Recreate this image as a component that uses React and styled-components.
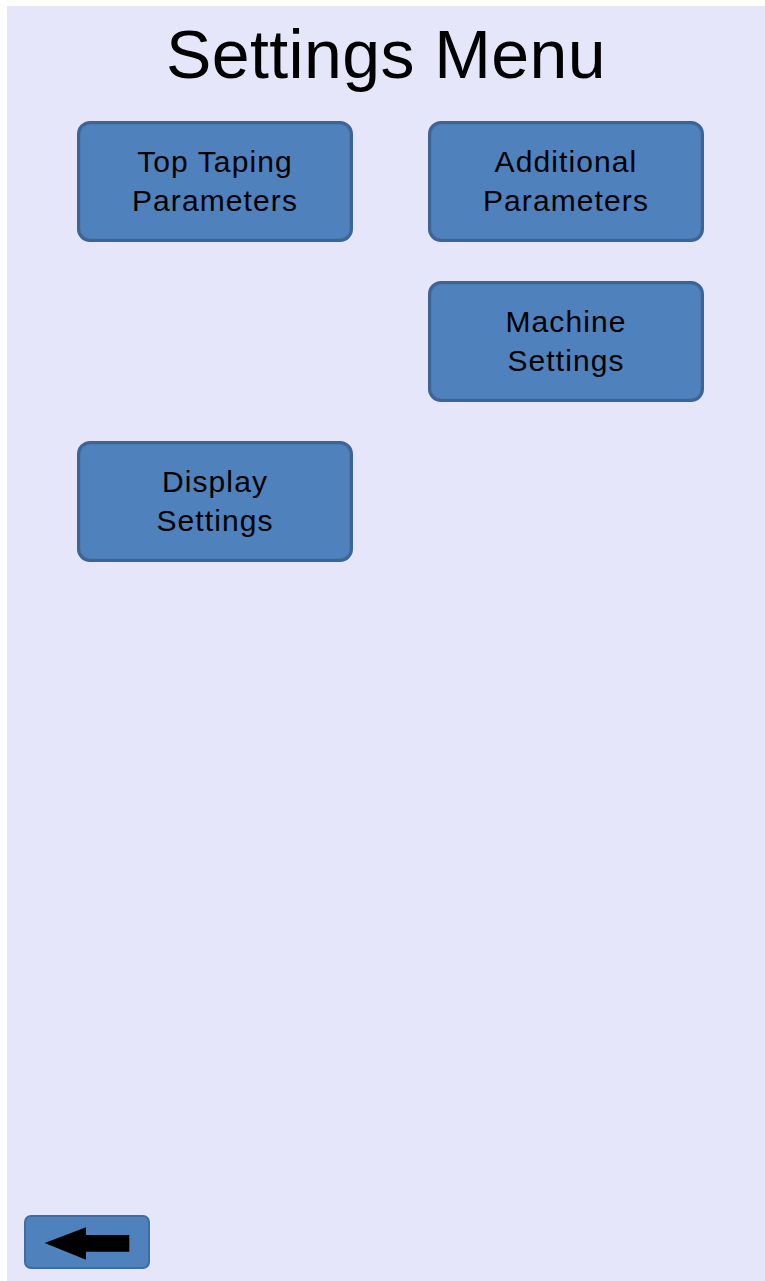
import React from "react";
import styled, { createGlobalStyle } from "styled-components";

const GlobalStyle = createGlobalStyle`
  html, body {
    margin: 0;
    padding: 0;
    background: #ffffff;
  }
  body {
    padding: 6px 0 0 7px;
    font-family: "Liberation Sans", Arial, sans-serif;
  }
`;

const Screen = styled.div`
  display: flex;
  flex-direction: column;
  min-height: 1275px;
  box-sizing: border-box;
  background: #e6e6fa;
  padding: 9px 0 12px 0;
`;

const Title = styled.h1`
  margin: 0;
  font-family: "Liberation Sans", Arial, sans-serif;
  font-weight: normal;
  font-size: 68px;
  line-height: 78px;
  letter-spacing: 0.4px;
  text-align: center;
  color: #000;
`;

const MenuGrid = styled.div`
  display: grid;
  grid-template-columns: 276px 276px;
  grid-auto-rows: 121px;
  column-gap: 75px;
  row-gap: 39px;
  margin: 28px 0 0 70px;
`;

const MenuButton = styled.button`
  grid-column: ${(p) => p.$col};
  grid-row: ${(p) => p.$row};
  display: flex;
  align-items: center;
  justify-content: center;
  box-sizing: border-box;
  background: #4f81bd;
  border: 3px solid #3c6494;
  border-radius: 13px;
  box-shadow: inset 0 0 0 1px #4a7ab3;
  color: #000;
  font-family: "Liberation Sans", Arial, sans-serif;
  font-size: 30px;
  letter-spacing: 1.1px;
  line-height: 39px;
  text-align: center;
  padding: 0 0 2px 0;
  cursor: pointer;
`;

const BackButton = styled.button`
  margin: auto 0 0 17px;
  width: 126px;
  height: 54px;
  box-sizing: border-box;
  padding: 0;
  display: flex;
  align-items: flex-start;
  background: #4f81bd;
  border: 2px solid #3f6ca3;
  border-radius: 7px;
  cursor: pointer;

  svg {
    display: block;
    margin: -2px 0 0 -2px;
  }
`;

const items = [
  { label: ["Top Taping", "Parameters"], col: 1, row: 1 },
  { label: ["Additional", "Parameters"], col: 2, row: 1 },
  { label: ["Machine", "Settings"], col: 2, row: 2 },
  { label: ["Display", "Settings"], col: 1, row: 3 },
];

const App = () => {
  return (
    <>
      <GlobalStyle />
      <Screen>
        <Title>Settings Menu</Title>
        <MenuGrid>
          {items.map((item) => (
            <MenuButton key={item.label.join(" ")} $col={item.col} $row={item.row}>
              {item.label[0]}
              <br />
              {item.label[1]}
            </MenuButton>
          ))}
        </MenuGrid>
        <BackButton aria-label="Back">
          <svg width="126" height="54" viewBox="0 0 126 54">
            <polygon
              points="21,28 63,12 63,20 107,20 107,37 63,37 63,45"
              fill="#000"
            />
          </svg>
        </BackButton>
      </Screen>
    </>
  );
};

export default App;
